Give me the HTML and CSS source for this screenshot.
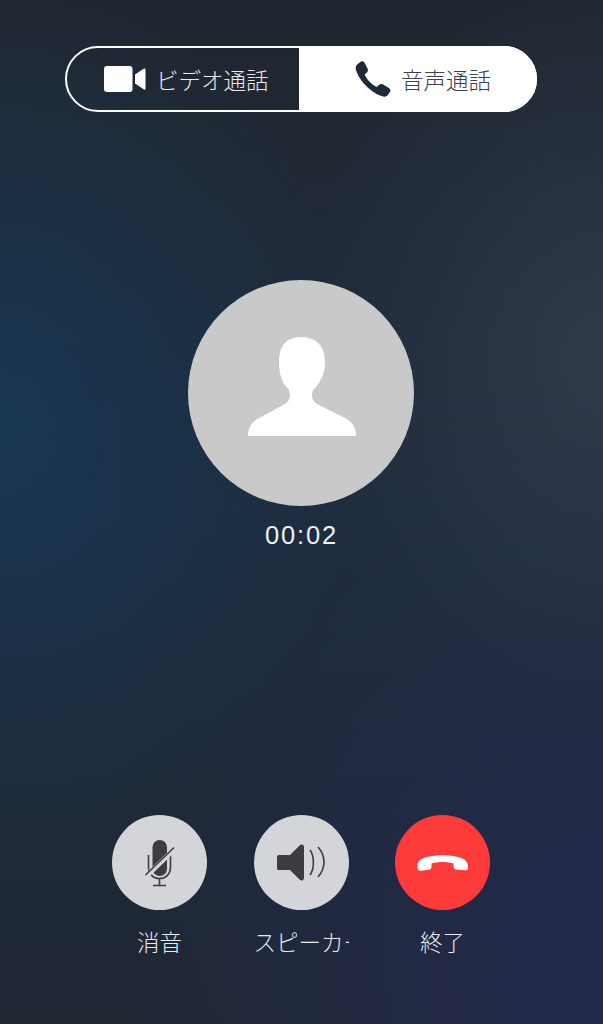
FILE: index.html
```html
<!DOCTYPE html>
<html lang="ja">
<head>
    <meta charset="UTF-8">
    <meta name="viewport" content="width=device-width, initial-scale=1.0">
    <title>通話</title>
    <link rel="stylesheet" href="styles.css">
</head>
<body>
    <div class="screen">
        <div class="toggle">
            <div class="tab tab-video">
                <svg class="icon-video" width="42" height="26" viewBox="0 0 42 26">
                    <rect x="0" y="0" width="28.500" height="26" rx="3" fill="#fff"/>
                    <path d="M31 8.500 L40 2.500 Q41.500 2 41.500 3.500 V22.500 Q41.500 24 40 23.500 L31 17.500 Z" fill="#fff"/>
                </svg>
                <span>ビデオ通話</span>
            </div>
            <div class="tab tab-voice">
                <svg class="icon-phone" width="36" height="36" viewBox="0 0 36 36">
                    <path d="M5.500 .8 C7 -.2 8.800 .2 9.600 1.800 L12.600 7.800 C13.300 9.200 13 10.700 11.800 11.700 L9.700 13.400 C11.500 18 16.800 23.700 21.800 26 L23.900 23.900 C25 22.800 26.500 22.600 27.800 23.300 L33.800 26.900 C35.500 27.900 35.900 29.800 34.800 31.300 L32.800 34 C31.700 35.400 30 36 28.200 35.500 C16.500 32.500 4 19.500 .9 8.700 C.3 6.700 .9 4.600 2.500 3.200 Z" fill="#1f2a38"/>
                </svg>
                <span>音声通話</span>
            </div>
        </div>

        <div class="avatar">
            <svg width="226" height="226" viewBox="0 0 226 226">
                <path d="M113 57 C128 57 137 66 137 82 C137 96 131 104 125 110 C123 116 124 121 129 124 L155 137 C164 141 168 147 168 156 H60 C60 147 64 141 73 137 L97 124 C102 121 103 116 101 110 C95 104 91 96 91 82 C91 66 98 57 113 57 Z" fill="#fff"/>
            </svg>
        </div>
        <div class="timer">00:02</div>

        <div class="controls">
            <div class="control">
                <div class="circle circle-grey">
                    <svg width="95" height="95" viewBox="0 0 95 95">
                        <rect x="40.500" y="25" width="14.500" height="36" rx="7.250" fill="#3b3d42"/>
                        <path d="M36.500 40 V52 C36.500 59 41 63.500 47.500 63.500 C54 63.500 58.500 59 58.500 52 V40" fill="none" stroke="#3b3d42" stroke-width="1.600"/>
                        <path d="M47.500 63.500 V70.500 M41 70.500 H54" fill="none" stroke="#3b3d42" stroke-width="1.600"/>
                        <path d="M35.500 60 L63 33.500" stroke="#d4d5d9" stroke-width="5"/>
                        <path d="M33.500 60 L62 32.500" stroke="#3b3d42" stroke-width="1.600"/>
                    </svg>
                </div>
                <div class="label">消音</div>
            </div>
            <div class="control">
                <div class="circle circle-grey">
                    <svg width="95" height="95" viewBox="0 0 95 95">
                        <path d="M25 40 C23.500 40 23 41 23 42 V53 C23 54.500 23.500 55 25 55 H36 L45.500 64.500 C47.500 66.500 50 65.500 50 63 V32 C50 29.500 47.500 28.500 45.500 30.500 L36 40 Z" fill="#3b3d42"/>
                        <path d="M56 35 C60.500 41 60.500 54 56 60" fill="none" stroke="#3b3d42" stroke-width="1.600"/>
                        <path d="M64 32 C72 41 72 53 64 62" fill="none" stroke="#3b3d42" stroke-width="1.600"/>
                    </svg>
                </div>
                <div class="label">スピーカー</div>
            </div>
            <div class="control">
                <div class="circle circle-red">
                    <svg width="95" height="95" viewBox="0 0 95 95">
                        <path d="M22.500 52 C22 47 25 44 30 42.500 C42 39 53 39 65 42.500 C70 44 73 47 73 52 C73 54.500 72 55.500 70 55.300 L61.500 54.500 C59.500 54.300 58.500 53 58.500 51 V48.500 C52 46.500 43 46.500 36.500 48.500 V51.500 C36.500 53.500 35.500 54.500 33.500 54.800 L26 55.800 C23.500 56.100 22.700 54.500 22.500 52 Z" fill="#fff"/>
                    </svg>
                </div>
                <div class="label">終了</div>
            </div>
        </div>
    </div>
</body>
</html>
```

FILE: styles.css
```css
*{
    margin:0px;
    padding:0px;
    box-sizing:border-box;
}
body{
    background-color:#1f2630;
    font-family:"Noto Sans CJK JP","Liberation Sans",sans-serif;
}
svg{
    display:block;
}
.screen{
    width:603px;
    height:1024px;
    overflow:hidden;
    padding-top:46px;
    padding-right:1px;
    display:flex;
    flex-direction:column;
    align-items:center;
    color:#e6e7ea;
    background:
        radial-gradient(ellipse 360px 440px at 0px 420px, rgba(24,58,88,0.8), rgba(24,58,88,0) 100%),
        radial-gradient(ellipse 300px 380px at 603px 360px, rgba(48,60,76,0.9), rgba(48,60,76,0) 100%),
        radial-gradient(ellipse 480px 480px at 603px 960px, rgba(36,42,80,0.9), rgba(36,42,80,0) 100%),
        linear-gradient(180deg, #20262f 0%, #1e2c3e 50%, #1f2733 100%);
}
.toggle{
    width:472px;
    height:66px;
    border:2px solid #fff;
    border-radius:33px;
    display:flex;
}
.tab{
    display:flex;
    align-items:center;
    font-size:22.5px;
    font-weight:300;
    line-height:1;
}
.tab-video{
    width:232px;
    padding-left:37px;
    gap:10px;
    color:#e8e9ec;
}
.tab-voice{
    flex:1;
    margin:-2px -2px -2px 0px;
    padding-left:56px;
    gap:10px;
    border-radius:0px 33px 33px 0px;
    background-color:#fff;
    color:#3a424e;
}
.avatar{
    width:226px;
    height:226px;
    margin-top:168px;
    border-radius:50%;
    background-color:#c9c9c9;
}
.timer{
    margin-top:14px;
    padding-left:1px;
    font-family:"Liberation Sans",sans-serif;
    font-size:25.5px;
    letter-spacing:1.800px;
    line-height:30px;
    color:#eef0f2;
}
.controls{
    margin-top:265px;
    display:flex;
    gap:46.5px;
}
.control{
    width:95px;
}
.circle{
    width:95px;
    height:95px;
    border-radius:50%;
}
.circle-grey{
    background-color:#d4d5d9;
}
.circle-red{
    background-color:#fe3b3b;
}
.label{
    margin-top:15px;
    font-size:22.5px;
    font-weight:300;
    line-height:32px;
    text-align:center;
    white-space:nowrap;
    overflow:hidden;
    color:#e8e9ec;
}
```
